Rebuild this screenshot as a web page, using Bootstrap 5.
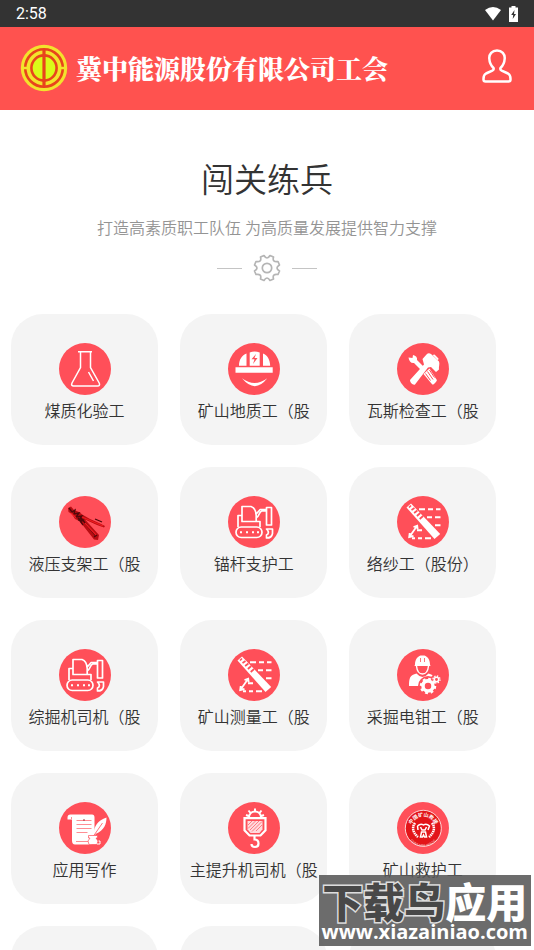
<!DOCTYPE html>
<html lang="zh-CN">
<head>
<meta charset="utf-8">
<meta name="viewport" content="width=device-width, initial-scale=1">
<title>闯关练兵</title>
<link href="https://cdn.jsdelivr.net/npm/bootstrap@5.3.0/dist/css/bootstrap.min.css" rel="stylesheet">
<style>
body{font-family:Roboto,"Noto Sans CJK SC",sans-serif;color:#333;background:#fff}
.status-bar{background:#333;height:27px;padding:0 16px;font-size:16px;line-height:27px}
.app-bar{background:#ff524f;height:83px;padding:0 22px 2px 20px}
.brand-name{font:900 26px/36px "Noto Serif CJK SC","Noto Sans CJK SC",serif;color:#fff;margin-left:8px}
.intro{padding-top:49px}
.intro h1{font-size:33px;line-height:44px;font-weight:350;margin-bottom:14px}
.intro p{font-size:16px;line-height:24px;font-weight:350;color:#949494;margin-bottom:13px}
.rule-line{width:25px;height:1px;background:#c4c4c4}
.job-grid{width:95%;padding:0 11px;margin-top:32px;display:grid;grid-template-columns:repeat(3,minmax(0,1fr));gap:22px}
.job-tile{height:131px;padding-top:29px;border-radius:32px;background:#f4f4f4;color:#333;font-size:16px;line-height:24px;font-weight:350}
.job-tile:hover{color:#333}
.job-tile svg{margin-bottom:5px}
.job-tile span{white-space:nowrap}
.site-stamp{right:3px;bottom:4px;padding:6px 3px 2px;background:rgba(88,88,88,.88);color:#fff}
.stamp-name{font:900 41px/38px "Noto Sans CJK SC",sans-serif}
.stamp-dark{color:#484848;-webkit-text-stroke:3px #ddd;paint-order:stroke fill}
.stamp-url{font:700 20px/25px "Open Sans",sans-serif}
</style>
</head>
<body>
<svg class="d-none" aria-hidden="true">
<defs>
<symbol id="digger" viewBox="0 0 52 52"><circle cx="26" cy="26" r="26" fill="#ff4f59"/><g fill="none" stroke="#fff" stroke-width="1.700" stroke-linejoin="round"><rect x="8" y="31" width="26" height="10.500" rx="5.200"/><path d="M10 31V19.500h4M32 31v-5.500H14v-15h9c3 1 5 5 5.200 9v6M28.200 22c3-1 2.500-6 5.500-7h4.800M28.200 18l4-4.500h6.300M38.500 11.500h5V29h-5zM38.500 33h6v4.500c-.5 3-3 4.500-6 4.500v-3c2.500-1 2.500-3.500 0-6z"/></g><path d="M12 36.200h2m4 0h2m4 0h2m3 0h2" stroke="#fff" stroke-width="2"/></symbol>
<symbol id="ruler" viewBox="0 0 52 52"><circle cx="26" cy="26" r="26" fill="#ff4f59"/><path d="M22 13.300h6m3 0h5m3 0h4.500M30 21.300h5m3 0h5.500M38 29.300h5.500M20 34.300h5M15 42.200h3m3 0h4m3 0h6" stroke="#fff" stroke-width="2"/><path d="M13 40 20 30m-7.300 7L12.200 41l4.300-1M16.500 31l3.700-1.200.5 3.500" fill="none" stroke="#fff" stroke-width="1.800"/><path d="M9.500 11.500 14 7.500 43.200 38l-5.700 5z" fill="#fff"/><path d="m12 11.500 2-2m.5 4.500 3-2m-.4 5 3.300-2.500m-.5 5.500 3.400-3m-.6 6 3.400-3" stroke="#ff4f59" stroke-width="1.700"/></symbol>
</defs>
</svg>
<div class="vh-100 overflow-hidden position-relative">
<div class="status-bar d-flex align-items-center justify-content-between text-white">
<span>2:58</span>
<span class="d-flex align-items-center gap-2">
<svg width="16" height="14" viewBox="0 0 16 14"><path d="M0 3Q8-3 16 3L8 13.500z" fill="#fff"/></svg>
<svg width="9" height="16" viewBox="0 0 9 16"><path d="M2.500 0h4v1.500H9V16H0V1.500h2.500z" fill="#fff"/><path d="M5.500 4 2.200 9h2L3.700 13 7 8H5z" fill="#333"/></svg>
</span>
</div>
<header class="app-bar d-flex align-items-center">
<svg width="48" height="48" viewBox="-24 -24 48 48" aria-hidden="true"><circle r="23.200" fill="#f3e32c"/><circle r="18.800" fill="none" stroke="#e8441c" stroke-width="2.600"/><path d="M-21-1.200h7v2.400h-7zM14-1.200h7v2.400h-7z" fill="#f3e32c"/><circle r="12.600" fill="#dafa19" stroke="#e8441c" stroke-width="2.600"/><path d="M0-18V18" stroke="#e8441c" stroke-width="3.200"/></svg>
<div class="brand-name text-nowrap">冀中能源股份有限公司工会</div>
<button class="btn p-0 pb-1 border-0 ms-auto d-flex" type="button" aria-label="个人中心"><svg width="30" height="34" viewBox="0 0 30 34"><path d="M15 1.500c-5 0-8 3.500-7.700 8 .2 4 1.500 7 4.200 9.500.6 1.500 0 2-1.200 2.600L4 24.500C2 25.500 1.400 28 1.500 30.500c0 1.300.6 2 2 2h23c1.400 0 2-.7 2-2 .1-2.500-.5-5-2.500-6l-6.300-2.900c-1.200-.6-1.800-1.100-1.200-2.600 2.700-2.500 4-5.500 4.200-9.500.3-4.500-2.700-8-7.700-8z" fill="none" stroke="#fff" stroke-width="2.500"/></svg></button>
</header>
<main>
<section class="intro text-center">
<h1>闯关练兵</h1>
<p>打造高素质职工队伍 为高质量发展提供智力支撑</p>
<div class="d-flex align-items-center justify-content-center">
<span class="rule-line"></span>
<svg class="mx-2" width="34" height="28" viewBox="-17 -14 34 28" fill="none" stroke="#b5b5b5" stroke-width="1.700" stroke-linejoin="round"><path d="M-3-12.500Q0-7.500 3-12.500L6.500-11Q5-5.500 11-6.500L12.500-3Q7.500 0 12.500 3L11 6.500Q5 5.500 6.500 11L3 12.500Q0 7.500-3 12.500L-6.500 11Q-5 5.500-11 6.500L-12.500 3Q-7.500 0-12.500-3L-11-6.500Q-5-5.500-6.500-11z"/><circle r="4.700"/></svg>
<span class="rule-line"></span>
</div>
</section>
<nav class="job-grid" aria-label="工种">
<a href="#" class="job-tile d-flex flex-column align-items-center text-decoration-none"><svg width="52" height="52" viewBox="0 0 52 52"><circle cx="26" cy="26" r="26" fill="#ff4f59"/><path d="M19 8.800h14M21.500 9v15.500L13 40c-1 2 0 3 1.500 3h24c2 0 2.500-1.500 1.700-3L31.500 24.500V9M29.500 29l5 9" fill="none" stroke="#fff" stroke-width="1.500"/></svg><span>煤质化验工</span></a>
<a href="#" class="job-tile d-flex flex-column align-items-center text-decoration-none"><svg width="52" height="52" viewBox="0 0 52 52"><circle cx="26" cy="26" r="26" fill="#ff4f59"/><path d="M7.500 24.300h37.200v5.500H7.500zM21.700 22.700V9.500q4.800-2 10 0v13.200zM11 22.700c0-6 3-10.700 7.500-12.200v12.200zM35 22.700V10.500c4.500 1.500 7 6.500 7.200 12.200zM14 35.300q12.500 9.500 25.300 0Q27 51 14 35.300z" fill="#fff"/><path d="m28 11-4.500 5.300h3L25 21l4.500-6h-3z" fill="#ff4f59"/></svg><span>矿山地质工（股</span></a>
<a href="#" class="job-tile d-flex flex-column align-items-center text-decoration-none"><svg width="52" height="52" viewBox="0 0 52 52"><circle cx="26" cy="26" r="26" fill="#ff4f59"/><g fill="#fff"><path d="m11.500 14.500 4 .5.500-3c3 .5 4.500 2.500 4 5l7 7-3 3-7-7c-3 .5-5-2-5.500-5.500z"/><path d="m26.500 31 6-5.500 7.300 11.500c.5 1-3 5-4.500 4.500z"/><path d="m13 37 14-15.500-1.500-5.500 4-4.500q2-2 4.500-.5l8 7.500c1 2-.5 6 0 8l-3 2.500-5-5-3 .5L18 41.500c-2 1-5-2-5-4.500z"/><path d="m35.500 12 2-.5 4 4-.5 2z"/></g><path d="m28.500 30.500 5 7m-3-9 5.500 8m-3.500-9.500 5 7.500" stroke="#ff4f59" stroke-width="1"/></svg><span>瓦斯检查工（股</span></a>

<a href="#" class="job-tile d-flex flex-column align-items-center text-decoration-none"><svg width="52" height="52" viewBox="0 0 52 52"><circle cx="26" cy="26" r="26" fill="#ff4f59"/><path d="m9 12 3-1.500 3 3.500 5 2 4 3 7 4 10 4.500 5 2.500-1 1.500-7-2.500-12-5.500L40 39l-1 5-4-.5L20.500 25 16 23l-3-5-3.500-2z" fill="#b80d12"/><path d="m10 12 3 4 3-2-1 4 5-1-3 4 6-1-3 4 5 0-4 2m1-4 15 18m-2 1 3-2m-19-17 5 7m12-6 7 3" fill="none" stroke="#50080b" stroke-width="1.300"/><path d="m12 17 5 5m6-1 21 9m-18-3 11 12" stroke="#ef1a20" stroke-width="1.200"/></svg><span>液压支架工（股</span></a>
<a href="#" class="job-tile d-flex flex-column align-items-center text-decoration-none"><svg width="52" height="52"><use href="#digger"/></svg><span>锚杆支护工</span></a>
<a href="#" class="job-tile d-flex flex-column align-items-center text-decoration-none"><svg width="52" height="52"><use href="#ruler"/></svg><span>络纱工（股份）</span></a>

<a href="#" class="job-tile d-flex flex-column align-items-center text-decoration-none"><svg width="52" height="52"><use href="#digger"/></svg><span>综掘机司机（股</span></a>
<a href="#" class="job-tile d-flex flex-column align-items-center text-decoration-none"><svg width="52" height="52"><use href="#ruler"/></svg><span>矿山测量工（股</span></a>
<a href="#" class="job-tile d-flex flex-column align-items-center text-decoration-none"><svg width="52" height="52" viewBox="0 0 52 52"><circle cx="26" cy="26" r="26" fill="#ff4f59"/><path d="M18 15.500c0-5 2.500-8 5.500-9h4c3 1 5.500 4 5.500 9l.5 1.500h-16zM12 37c0-8 1-11 7.500-12.500q6 7 12 0 3 .5 5 2.500v10z" fill="#fff"/><path d="M19.500 17c.5 5 3 8 6 8s5.500-3 6-8" fill="none" stroke="#fff" stroke-width="1.400"/><path d="M23.500 9v4m4-4v4" stroke="#ff4f59" stroke-width=".8"/><g fill="none" stroke="#ff4f59"><circle cx="31" cy="37" r="8.500" stroke-width="3"/><circle cx="39.500" cy="30.500" r="4.800" stroke-width="2"/></g><g fill="#ff4f59" stroke="#fff"><circle cx="31" cy="37" r="5" stroke-width="3.500"/><circle cx="31" cy="37" r="7" stroke-width="2.500" stroke-dasharray="2.750 2.748" fill="none"/><circle cx="39.500" cy="30.500" r="2.200" stroke-width="1.500"/><circle cx="39.500" cy="30.500" r="3.500" stroke-width="1.400" stroke-dasharray="1.370 1.378" fill="none"/></g></svg><span>采掘电钳工（股</span></a>

<a href="#" class="job-tile d-flex flex-column align-items-center text-decoration-none"><svg width="52" height="52" viewBox="0 0 52 52"><circle cx="26" cy="26" r="26" fill="#ff4f59"/><path d="M8.500 17.500v-2q0-3 3-3H33q2.500 0 2.500 3V35l-3 2v5.500H16q-3 0-3-4v-21z" fill="#fff"/><path d="M12.500 17v-2M17.500 18.500h15m-15 4h15m-15 4h15m-15 4h11M17 39.500h12" stroke="#ff8087" stroke-width=".9"/><circle cx="25" cy="18" r=".8" fill="#8f1d24"/><path d="M34.500 33q0-13 13-17.500c0 6-2 13-11 16.500l-1 4z" fill="#fff"/><path d="m34.500 34 9-13" stroke="#ff4f59" stroke-width=".8"/><path d="M29.500 33.500h9V36H37l2 3-1 3.500h-8L29 39l2-3h-1.500z" fill="#fff" stroke="#ff4f59" stroke-width=".7"/><path d="M39.500 39H41v3h-3" fill="none" stroke="#fff"/></svg><span>应用写作</span></a>
<a href="#" class="job-tile d-flex flex-column align-items-center text-decoration-none"><svg width="52" height="52" viewBox="0 0 52 52"><circle cx="26" cy="26" r="26" fill="#ff4f59"/><path d="M21 15c.5-7.500 11.500-7.500 12 0M27 9.500V6.500M22.500 11l-2-2.500M31.500 11l2-2.500M20.500 14l-2.500-1M33.500 14l2.500-1" fill="none" stroke="#fff" stroke-width="2"/><path d="M16.500 16.200h21v12l-5 5.300h-11l-5-5.300z" fill="none" stroke="#fff" stroke-width="2.200"/><path d="M19.500 19h15v8.200L31.500 31h-9l-3-3.800z" fill="#ffdadd"/><path d="m20 23 4-4m-4 7.500 7.500-7.500M22 28l9-9m-7 10.500L34 19.500m-6 9.500 6-6" stroke="#ff626b" stroke-width=".8"/><path d="M26.500 34v3.500c2.500 0 4 1.500 4 4s-1.500 3.500-3.500 3.500-3.500-1-3.500-3" fill="none" stroke="#fff" stroke-width="2.200"/></svg><span>主提升机司机（股</span></a>
<a href="#" class="job-tile d-flex flex-column align-items-center text-decoration-none"><svg width="52" height="52" viewBox="0 0 52 52"><circle cx="26" cy="26" r="26" fill="#ff4f59"/><circle cx="26.300" cy="26.300" r="18" fill="#e31519" stroke="#fff" stroke-width=".8"/><path id="arcTop" d="M13.800 27a12.500 12.500 0 0 1 25 0" fill="none"/><path id="arcLow" d="M9.800 28a16.500 16.500 0 0 0 33 0" fill="none"/><g fill="#fff" text-anchor="middle"><text font-size="5" font-weight="700"><textPath href="#arcTop" startOffset="50%">中国矿山救援</textPath></text><text font-size="3"><textPath href="#arcLow" startOffset="50%">CHINA MINE RESCUE</textPath></text></g><path d="M18 21q-5 7 3 14M35 21q5 7-3 14" fill="none" stroke="#fff" stroke-width="2.500" stroke-dasharray="1.500 .6"/><path d="M20.500 24q3-3 6-1 3-2 6 1l-1.500 4m-10 0-.5-4m3 1 1.500 3h3l1.500-3M23.500 35l1-5h4l1 5h-2l-1-2-1 2z" fill="none" stroke="#fff" stroke-width="1.500"/></svg><span>矿山救护工</span></a>

<a href="#" class="job-tile" aria-label="更多工种"></a>
<a href="#" class="job-tile" aria-label="更多工种"></a>
<a href="#" class="job-tile" aria-label="更多工种"></a>
</nav>
</main>
<aside class="site-stamp position-absolute text-center text-nowrap">
<div class="stamp-name"><span class="stamp-dark">下载鸟</span>应用</div>
<div class="stamp-url">www.xiazainiao.com</div>
</aside>
</div>
<script src="https://cdn.jsdelivr.net/npm/bootstrap@5.3.0/dist/js/bootstrap.bundle.min.js"></script>
</body>
</html>
